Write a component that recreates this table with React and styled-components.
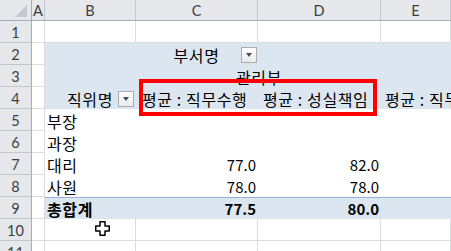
import React from "react";
import styled, { createGlobalStyle, css } from "styled-components";

const GlobalStyle = createGlobalStyle`
  html, body { margin: 0; padding: 0; background: #ffffff; }
  body { width: 451px; height: 251px; overflow: hidden; }
`;

const HEAD_BG = "#e6e8eb";
const HEAD_LINE = "#c3c6ca";
const HEAD_EDGE = "#a9adb3";
const GRID = "#dadcdd";
const PIVOT_BG = "#dce6f1";
const PIVOT_RULE = "#95b3d7";
const KR = `"Noto Sans CJK KR", "Noto Sans", sans-serif`;

const Sheet = styled.div`
  position: relative;
  width: 451px;
  height: 251px;
  overflow: hidden;
  display: grid;
  grid-template-columns: 32px 13px 91px 122px 123px 1fr;
  grid-template-rows: 21px repeat(11, 22px);
  font-family: ${KR};
  font-size: 16px;
  letter-spacing: 0.6px;
  color: #000;
`;

const Corner = styled.div`
  background: ${HEAD_BG};
  border-right: 1px solid ${HEAD_EDGE};
  border-bottom: 1px solid ${HEAD_EDGE};
  box-sizing: border-box;
  display: flex;
  align-items: flex-end;
  justify-content: flex-end;
  padding: 0 4px 3px 0;
`;

const headText = css`
  background: ${HEAD_BG};
  box-sizing: border-box;
  display: flex;
  align-items: center;
  justify-content: center;
  font-family: Lato, "Open Sans", sans-serif;
  font-size: 14.5px;
  letter-spacing: 0;
  color: #3b3e45;
  padding-top: 1px;
`;

const ColHead = styled.div`
  ${headText}
  border-right: 1px solid ${HEAD_LINE};
  border-bottom: 1px solid ${HEAD_EDGE};
`;

const RowHead = styled.div`
  ${headText}
  border-right: 1px solid ${HEAD_EDGE};
  border-bottom: 1px solid ${HEAD_LINE};
`;

const kinds = {
  plain: css`
    background: #ffffff;
    border-right: 1px solid ${GRID};
    border-bottom: 1px solid ${GRID};
  `,
  pivot: css`
    background: ${PIVOT_BG};
  `,
  body: css`
    background: #ffffff;
  `,
  total: css`
    background: ${PIVOT_BG};
    box-shadow: inset 0 1px 0 ${PIVOT_RULE};
    font-weight: 700;
  `,
};

const Cell = styled.div`
  box-sizing: border-box;
  display: flex;
  align-items: center;
  min-width: 0;
  overflow: hidden;
  white-space: nowrap;
  line-height: 20px;
  padding: 1px 2px 0 ${(p) => p.$indent ?? 3}px;
  grid-column: ${(p) => p.$span || "auto"};
  justify-content: ${(p) =>
    p.$align === "right" ? "flex-end" : p.$align === "center" ? "center" : "flex-start"};
  ${(p) =>
    p.$num &&
    css`
      font-size: 15px;
      letter-spacing: 0;
    `}
  ${(p) => kinds[p.$kind || "plain"]}
`;

const FieldCell = styled(Cell)`
  display: grid;
  grid-template-columns: 17px 1fr 17px;
  align-items: center;
  justify-items: center;
  padding: 1px 1px 0 0;
`;

const RowFieldCell = styled(Cell)`
  justify-content: flex-end;
  gap: 5px;
  padding-right: 2px;
`;

const DropButton = styled.span`
  grid-column: ${(p) => p.$col || "auto"};
  box-sizing: border-box;
  flex: none;
  width: 16px;
  height: 16px;
  border: 1px solid #a8abb0;
  background: linear-gradient(#ffffff, #e9eaec);
  display: flex;
  align-items: center;
  justify-content: center;
  &::after {
    content: "";
    width: 0;
    height: 0;
    border-left: 3.5px solid transparent;
    border-right: 3.5px solid transparent;
    border-top: 4px solid #4a4d52;
    margin-top: 1px;
  }
`;

const Mark = styled.div`
  position: absolute;
  left: 139px;
  top: 79px;
  width: 238px;
  height: 37px;
  box-sizing: border-box;
  border: 4px solid #ff0000;
  pointer-events: none;
`;

const Pointer = styled.svg`
  position: absolute;
  left: 95px;
  top: 221px;
  width: 15px;
  height: 15px;
`;

const letters = ["A", "B", "C", "D", "E"];

const rows = [
  { label: "부장" },
  { label: "과장" },
  { label: "대리", a: "77.0", b: "82.0" },
  { label: "사원", a: "78.0", b: "78.0" },
];

function PlainRow({ n }) {
  return (
    <>
      <RowHead>{n}</RowHead>
      {letters.map((l) => (
        <Cell key={l} $kind="plain" />
      ))}
    </>
  );
}

export default function App() {
  return (
    <>
      <GlobalStyle />
      <Sheet>
        <Corner>
          <svg width="12" height="12" viewBox="0 0 12 12">
            <polygon points="12,0 12,12 0,12" fill="#c4c7cc" />
          </svg>
        </Corner>
        {letters.map((l) => (
          <ColHead key={l}>{l}</ColHead>
        ))}

        <PlainRow n={1} />

        <RowHead>2</RowHead>
        <Cell $kind="plain" />
        <Cell $kind="pivot" />
        <FieldCell $kind="pivot">
          <span style={{ gridColumn: 2 }}>부서명</span>
          <DropButton $col={3} />
        </FieldCell>
        <Cell $kind="pivot" />
        <Cell $kind="pivot" />

        <RowHead>3</RowHead>
        <Cell $kind="plain" />
        <Cell $kind="pivot" />
        <Cell $kind="pivot" $span="span 2" $align="center">
          관리부
        </Cell>
        <Cell $kind="pivot" />

        <RowHead>4</RowHead>
        <Cell $kind="plain" />
        <RowFieldCell $kind="pivot">
          <span>직위명</span>
          <DropButton />
        </RowFieldCell>
        <Cell $kind="pivot" $indent={6}>
          평균 : 직무수행
        </Cell>
        <Cell $kind="pivot" $indent={5}>
          평균 : 성실책임
        </Cell>
        <Cell $kind="pivot" $indent={4}>
          평균 : 직무지식
        </Cell>

        {rows.map((r, i) => (
          <React.Fragment key={r.label}>
            <RowHead>{i + 5}</RowHead>
            <Cell $kind="plain" />
            <Cell $kind="body" $indent={2}>
              {r.label}
            </Cell>
            <Cell $kind="body" $align="right" $num>
              {r.a}
            </Cell>
            <Cell $kind="body" $align="right" $num>
              {r.b}
            </Cell>
            <Cell $kind="body" />
          </React.Fragment>
        ))}

        <RowHead>9</RowHead>
        <Cell $kind="plain" />
        <Cell $kind="total" $indent={2}>
          총합계
        </Cell>
        <Cell $kind="total" $align="right" $num>
          77.5
        </Cell>
        <Cell $kind="total" $align="right" $num>
          80.0
        </Cell>
        <Cell $kind="total" />

        <PlainRow n={10} />
        <PlainRow n={11} />

        <Mark />
        <Pointer viewBox="0 0 15 15">
          <polygon
            points="5,0.75 10,0.75 10,5 14.25,5 14.25,10 10,10 10,14.25 5,14.25 5,10 0.75,10 0.75,5 5,5"
            fill="#ffffff"
            stroke="#000000"
            strokeWidth="1.5"
            strokeLinejoin="round"
          />
        </Pointer>
      </Sheet>
    </>
  );
}
